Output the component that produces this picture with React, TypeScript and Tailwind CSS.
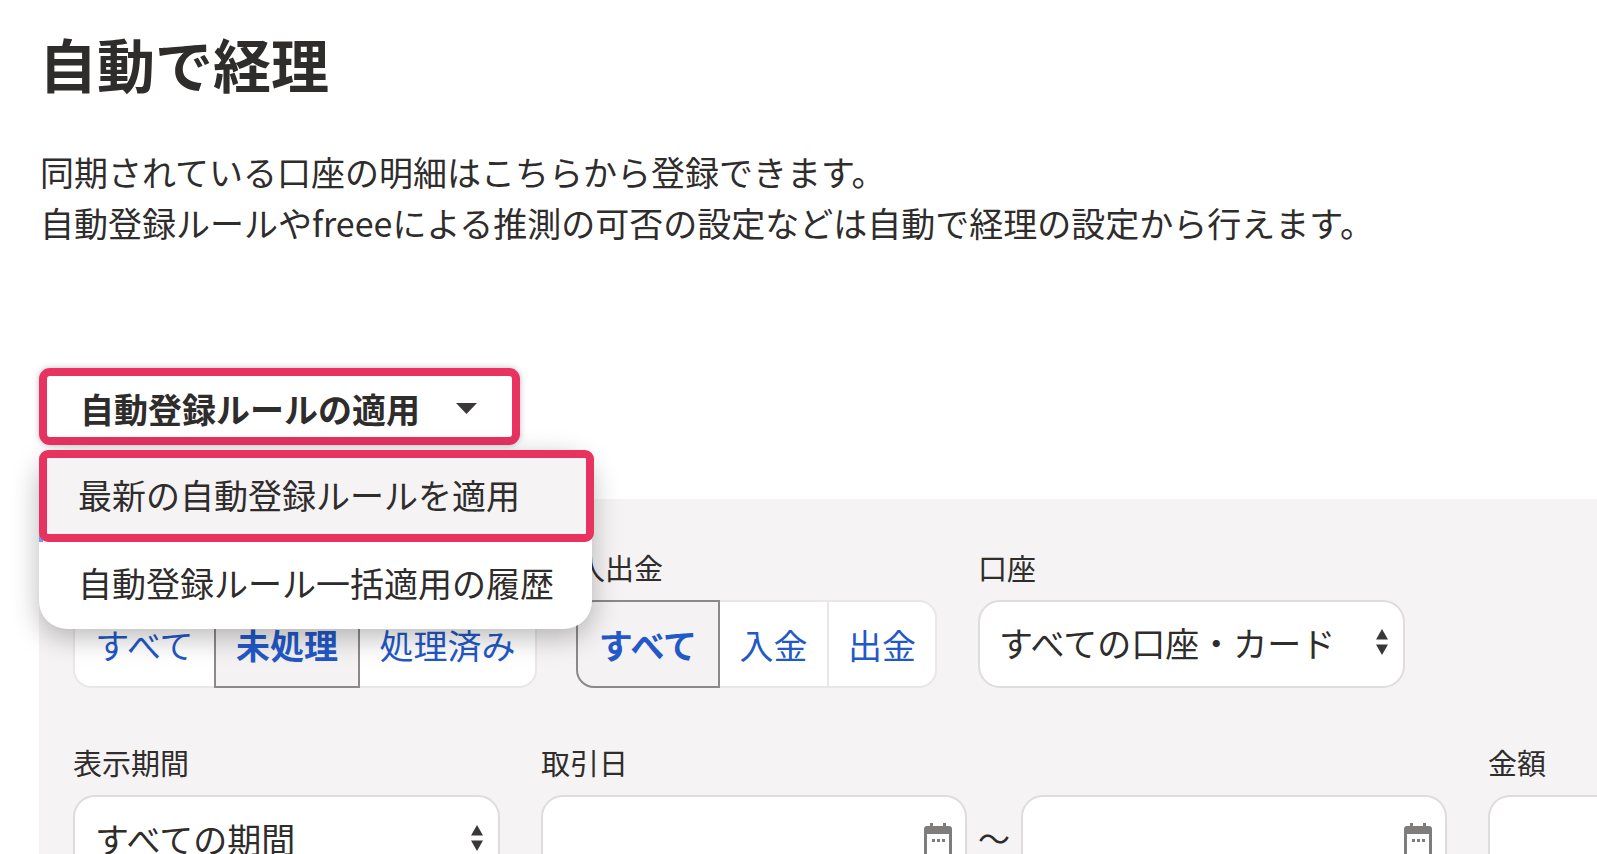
import { ReactNode } from 'react'

function UpDown() {
  return (
    <svg width="14" height="28" viewBox="0 0 14 28" className="shrink-0">
      <path d="M7 1 L13 11.5 H1 Z" fill="#3a3737" />
      <path d="M7 27 L13 16.5 H1 Z" fill="#3a3737" />
    </svg>
  )
}

function CalendarIcon() {
  return (
    <svg width="30" height="36" viewBox="0 0 30 36" className="shrink-0">
      <path d="M7 0h3v3h10V0h3v3h3a3 3 0 0 1 3 3v30H1V6a3 3 0 0 1 3-3h3z" fill="#7f7c7c" />
      <rect x="4" y="11" width="22" height="25" fill="#fff" />
      <rect x="9" y="16" width="3" height="3" fill="#7f7c7c" />
      <rect x="14" y="16" width="3" height="3" fill="#7f7c7c" />
      <rect x="19" y="16" width="3" height="3" fill="#7f7c7c" />
    </svg>
  )
}

function Field({ label, className, children }: { label?: string; className: string; children: ReactNode }) {
  return (
    <div className={className}>
      <div className="h-[40px] text-[29px] leading-[38px] text-[#2f2c2c]">{label}</div>
      <div className="mt-[12px]">{children}</div>
    </div>
  )
}

function Segment({ label, active, className }: { label: string; active?: boolean; className: string }) {
  return (
    <div
      className={`-ml-[2px] first:ml-0 flex h-[88px] items-center justify-center text-[34px] text-[#2358c8] ${
        active ? 'relative border-2 border-[#8c8989] bg-[#f4f2f3] font-bold' : 'border-2 border-[#e9e7e7] bg-white'
      } ${className}`}
    >
      {label}
    </div>
  )
}

export default function App() {
  return (
    <div
      className="relative h-[854px] w-[1597px] overflow-hidden bg-white text-[#2f2c2c]"
      style={{ fontFamily: '"Noto Sans CJK JP", "Noto Sans", sans-serif' }}
    >
      <div className="pl-[40px] pt-[23px]">
        <h1 className="-ml-[1px] h-[80px] text-[58px] font-bold leading-[80px]">自動で経理</h1>
        <p className="mt-[43px] text-[34px] leading-[51px] whitespace-nowrap">
          同期されている口座の明細はこちらから登録できます。
          <br />
          自動登録ルールやfreeeによる推測の可否の設定などは自動で経理の設定から行えます。
        </p>
      </div>

      <div className="ml-[39px] mt-[120px] flex h-[77px] w-[481px] items-center rounded-[11px] border-[8px] border-[#e8325f] bg-white pl-[33px] pt-[4px] shadow-[0_0_6px_rgba(0,0,0,0.25)]">
        <span className="text-[34px] font-bold whitespace-nowrap">自動登録ルールの適用</span>
        <svg width="21" height="11" viewBox="0 0 21 11" className="ml-[36px] shrink-0">
          <path d="M0 0 H21 L10.5 11 Z" fill="#3a3737" />
        </svg>
      </div>

      <div className="ml-[39px] mt-[54px] h-[400px] bg-[#f5f3f4] pl-[34px] pt-[49px]">
        <div className="flex">
          <Field className="w-[464px]">
            <div className="flex">
              <Segment label="すべて" className="w-[143px] rounded-l-[18px]" />
              <Segment label="未処理" active className="w-[146px]" />
              <Segment label="処理済み" className="w-[179px] rounded-r-[18px]" />
            </div>
          </Field>
          <Field label="入出金" className="ml-[39px] w-[361px]">
            <div className="flex">
              <Segment label="すべて" active className="w-[144px] rounded-l-[18px]" />
              <Segment label="入金" className="w-[111px]" />
              <Segment label="出金" className="w-[110px] rounded-r-[18px]" />
            </div>
          </Field>
          <Field label="口座" className="ml-[41px] w-[427px]">
            <div className="flex h-[88px] items-center justify-between rounded-[22px] border-2 border-[#dedcdc] bg-white pb-[4px] pl-[19px] pr-[14px] text-[34px]">
              <span className="whitespace-nowrap">すべての口座・カード</span>
              <UpDown />
            </div>
          </Field>
        </div>

        <div className="mt-[55px] flex">
          <Field label="表示期間" className="w-[427px]">
            <div className="flex h-[88px] items-center justify-between rounded-[22px] border-2 border-[#dedcdc] bg-white pb-[2px] pl-[20px] pr-[14px] text-[34px]">
              <span className="whitespace-nowrap">すべての期間</span>
              <UpDown />
            </div>
          </Field>
          <Field label="取引日" className="ml-[41px] w-[906px]">
            <div className="flex items-start">
              <div className="flex h-[88px] w-[426px] items-start justify-end rounded-[22px] border-2 border-[#dedcdc] bg-white pr-[12px] pt-[26px]">
                <CalendarIcon />
              </div>
              <span className="w-[54px] pt-[18px] text-center text-[32px]">〜</span>
              <div className="flex h-[88px] w-[426px] items-start justify-end rounded-[22px] border-2 border-[#dedcdc] bg-white pr-[12px] pt-[26px]">
                <CalendarIcon />
              </div>
            </div>
          </Field>
          <Field label="金額" className="ml-[41px] flex-1">
            <div className="h-[88px] rounded-l-[22px] border-2 border-r-0 border-[#dedcdc] bg-white" />
          </Field>
        </div>
      </div>

      <div className="absolute left-[39px] top-[450px] w-[553px] rounded-[28px] bg-white shadow-[0_8px_28px_rgba(0,0,0,0.28)]">
        <div className="absolute left-0 top-[84px] h-[8px] w-[4px] bg-[#6f9ded]" />
        <div className="relative flex h-[92px] w-[555px] items-center rounded-[9px] border-[8px] border-[#e8325f] bg-[#f5f3f4] pb-[4px] pl-[31px] text-[34px] whitespace-nowrap">
          最新の自動登録ルールを適用
        </div>
        <div className="flex h-[87px] items-center pb-[6px] pl-[39px] text-[34px] whitespace-nowrap">
          自動登録ルール一括適用の履歴
        </div>
      </div>
    </div>
  )
}
